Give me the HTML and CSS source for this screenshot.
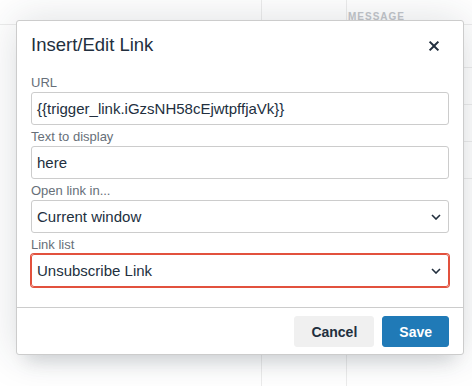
FILE: index.html
```html
<!DOCTYPE html>
<html lang="en">
<head>
    <meta charset="UTF-8">
    <meta name="viewport" content="width=device-width, initial-scale=1.0">
    <title>Insert/Edit Link</title>
    <link rel="stylesheet" href="styles.css">
</head>
<body>
    <div class="page">
        <div class="page-head">
            <div class="col col-a"></div>
            <div class="col col-b"></div>
            <div class="col"><span class="head-label">MESSAGE</span></div>
        </div>
        <div class="page-body">
            <div class="col col-a"></div>
            <div class="col col-b"></div>
            <div class="col rows">
                <div class="row">Hi, an extra</div>
                <div class="row"><span class="row-icon">&#9776;</span> Footer</div>
                <div class="row">&nbsp;</div>
                <div class="row">Thanks to all</div>
            </div>
        </div>
    </div>

    <div class="dialog">
        <div class="dialog-header">
            <h1>Insert/Edit Link</h1>
            <button class="close-button" aria-label="Close">
                <svg width="24" height="24" viewBox="0 0 24 24"><path d="M17.1 8.3L13.4 12l3.7 3.7-1.4 1.4-3.7-3.7-3.7 3.7-1.4-1.4 3.7-3.7-3.7-3.7 1.4-1.4 3.7 3.7 3.7-3.7z" fill="#222f3e"/></svg>
            </button>
        </div>

        <div class="dialog-body">
            <div class="field">
                <label for="url">URL</label>
                <div class="textbox" id="url">{{trigger_link.iGzsNH58cEjwtpffjaVk}}</div>
            </div>
            <div class="field">
                <label for="text">Text to display</label>
                <div class="textbox" id="text">here</div>
            </div>
            <div class="field">
                <label for="target">Open link in...</label>
                <div class="textbox select" id="target">
                    <span>Current window</span>
                    <svg class="chevron" width="10" height="6" viewBox="0 0 10 6"><path d="M1 1l4 4 4-4" fill="none" stroke="#222f3e" stroke-width="1.6"/></svg>
                </div>
            </div>
            <div class="field">
                <label for="link-list">Link list</label>
                <div class="textbox select focused" id="link-list">
                    <span>Unsubscribe Link</span>
                    <svg class="chevron" width="10" height="6" viewBox="0 0 10 6"><path d="M1 1l4 4 4-4" fill="none" stroke="#222f3e" stroke-width="1.6"/></svg>
                </div>
            </div>
        </div>

        <div class="dialog-footer">
            <button class="btn btn-secondary">Cancel</button>
            <button class="btn btn-primary">Save</button>
        </div>
    </div>
</body>
</html>
```

FILE: styles.css
```css
body {
    margin: 0;
    padding: 0;
    width: 472px;
    height: 386px;
    overflow: hidden;
    background-color: #fff;
    font-family: "Liberation Sans", Arial, sans-serif;
    color: #222f3e;
}

/* page behind the dialog, washed out */
.page {
    height: 386px;
}

.page-head,
.page-body {
    display: grid;
    grid-template-columns: 262px 85px 1fr;
}

.page-head {
    height: 24px;
    border-bottom: 1px solid #ececec;
}

.page-body {
    height: 361px;
}

.col-a {
    border-right: 1px solid #ececec;
}

.col-b {
    border-right: 1px solid #ececec;
}

.head-label {
    display: block;
    padding: 11px 0 0 1px;
    font-size: 10px;
    font-weight: bold;
    letter-spacing: 1px;
    color: #c3c6cb;
}

.rows {
    padding-top: 42px;
}

.row {
    height: 36px;
    line-height: 36px;
    border-top: 1px solid #ececec;
    padding-left: 8px;
    font-size: 14px;
    color: #b4b8bd;
    white-space: nowrap;
}

.row-icon {
    color: #c8cbcf;
}

/* dialog */
.dialog {
    position: absolute;
    left: 16px;
    top: 20px;
    width: 446px;
    background: #fff;
    border: 1px solid #ccc;
    border-radius: 3px;
    box-shadow: 0 16px 16px -10px rgba(34, 47, 62, 0.15), 0 0 40px 1px rgba(34, 47, 62, 0.15);
}

.dialog-header {
    display: flex;
    align-items: center;
    justify-content: space-between;
    height: 53px;
    padding: 0 14px;
}

.dialog-header h1 {
    margin: 0;
    font-size: 18.5px;
    font-weight: normal;
    line-height: 24px;
    padding-bottom: 5px;
}

.close-button {
    width: 24px;
    height: 24px;
    padding: 0;
    margin: 0 3px 4px 0;
    border: none;
    background: none;
    cursor: pointer;
}

.dialog-body {
    padding: 0 14px 20px;
}

.field {
    margin-top: 3px;
}

.field:first-child {
    margin-top: 0;
}

.field label {
    display: block;
    font-size: 13px;
    line-height: 18px;
    color: #676f79;
}

.textbox {
    box-sizing: border-box;
    height: 33px;
    padding: 0 5px;
    border: 1px solid #ccc;
    border-radius: 3px;
    font-size: 15px;
    line-height: 31px;
    white-space: nowrap;
}

.select {
    display: flex;
    align-items: center;
    justify-content: space-between;
    padding-right: 7px;
}

.focused {
    border-color: #e2513d;
    box-shadow: 0 0 0 1px #e2513d;
}

.dialog-footer {
    display: flex;
    justify-content: flex-end;
    gap: 8px;
    padding: 8px 14px 7px;
    border-top: 1px solid #ccc;
}

.btn {
    height: 31px;
    padding: 0 16px;
    border-radius: 3px;
    font-family: "Liberation Sans", Arial, sans-serif;
    font-size: 14px;
    font-weight: bold;
    cursor: pointer;
}

.btn-secondary {
    background-color: #f0f0f0;
    border: 1px solid #f0f0f0;
    color: #222f3e;
}

.btn-primary {
    background-color: #207ab7;
    border: 1px solid #207ab7;
    color: #fff;
}
```
